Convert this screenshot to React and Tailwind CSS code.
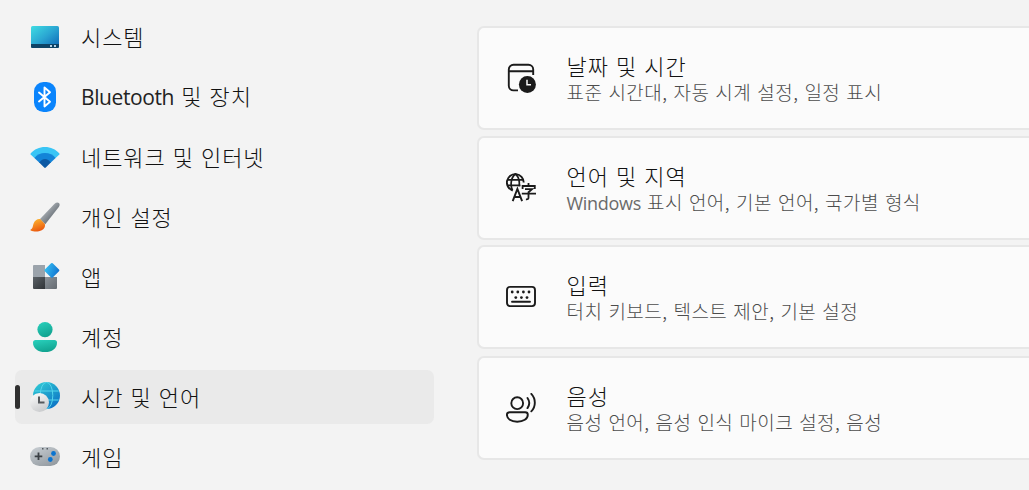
import React, { useState } from 'react';

// 사이드바 아이콘 (30x30)
function SystemIcon() {
  return (
    <svg width="30" height="30" viewBox="0 0 30 30">
      <defs>
        <linearGradient id="sys" x1="0" y1="0" x2="1" y2="1">
          <stop offset="0" stopColor="#3fdde3" />
          <stop offset="0.5" stopColor="#2aa5d2" />
          <stop offset="1" stopColor="#0b63b5" />
        </linearGradient>
      </defs>
      <rect x="1" y="4" width="28" height="22" rx="1.6" fill="url(#sys)" />
      <path d="M1 22h28v2.400a1.600 1.600 0 0 1-1.600 1.600H2.600A1.600 1.600 0 0 1 1 24.400z" fill="#0d4366" />
      <rect x="20" y="23" width="2" height="2" fill="#b5d3e6" />
      <rect x="24" y="23" width="2" height="2" fill="#b5d3e6" />
    </svg>
  );
}

function BluetoothIcon() {
  return (
    <svg width="30" height="30" viewBox="0 0 30 30">
      <rect x="4" y="0" width="22" height="30" rx="9.5" fill="#0a84fc" />
      <path d="M9 10.500l11 9.200-5.500 4.800v-19l5.500 4.800-11 9.200" fill="none" stroke="#fff" strokeWidth="1.9" strokeLinejoin="round" strokeLinecap="round" />
    </svg>
  );
}

function NetworkIcon() {
  return (
    <svg width="30" height="30" viewBox="0 0 30 30">
      <path d="M.600 11.400C4.300 7.300 9.300 5 15 5s10.700 2.300 14.400 6.400c.300.400.300.900 0 1.200L25.600 16H4.400L.600 12.600c-.300-.300-.300-.800 0-1.200z" fill="#39c5f5" />
      <path d="M4.400 16C7 12.800 10.700 11 15 11s8 1.800 10.600 5L20.300 21H9.700z" fill="#1384d8" />
      <path d="M9.200 20.600C10.700 18.500 12.700 17 15 17s4.300 1.500 5.800 3.600l-5 4.900c-.500.500-1.100.500-1.600 0z" fill="#0c59a4" />
    </svg>
  );
}

function BrushIcon() {
  return (
    <svg width="30" height="30" viewBox="0 0 30 30">
      <defs>
        <linearGradient id="handle" x1="0.2" y1="0.3" x2="0.7" y2="0.8">
          <stop offset="0" stopColor="#b4babf" />
          <stop offset="1" stopColor="#5f666d" />
        </linearGradient>
        <linearGradient id="tip" x1="0.3" y1="0" x2="0.7" y2="1">
          <stop offset="0" stopColor="#fdb52f" />
          <stop offset="1" stopColor="#e9520c" />
        </linearGradient>
      </defs>
      <path d="M9.800 17.200L24.600 1.800c1.500-1.500 3.300-1.600 4.300-.800 1 .900 1 2.400-.100 4L15.300 22.200z" fill="url(#handle)" />
      <path d="M.700 27.400c2.400-1 1.900-3.200 3-6.100 1.100-3 3.900-4.700 6.400-4.200l4.800 4.800c.700 2.700-.900 5.100-3.200 6.300-3.200 1.700-8 1.600-10.900.3-.500-.3-.500-.900-.1-1.100z" fill="url(#tip)" />
    </svg>
  );
}

function AppsIcon() {
  return (
    <svg width="30" height="30" viewBox="0 0 30 30">
      <defs>
        <linearGradient id="dark" x1="0" y1="0" x2="1" y2="1">
          <stop offset="0" stopColor="#5c6267" />
          <stop offset="1" stopColor="#303438" />
        </linearGradient>
        <linearGradient id="mid" x1="0" y1="0" x2="1" y2="1">
          <stop offset="0" stopColor="#8b9299" />
          <stop offset="1" stopColor="#656b71" />
        </linearGradient>
        <linearGradient id="gem" x1="0" y1="0.300" x2="1" y2="0.700">
          <stop offset="0" stopColor="#37c2f4" />
          <stop offset="1" stopColor="#0f6fce" />
        </linearGradient>
      </defs>
      <path d="M4 3h11v12H3V4a1 1 0 0 1 1-1z" fill="#9ba3ab" />
      <path d="M3 15h12v12H4a1 1 0 0 1-1-1z" fill="url(#dark)" />
      <path d="M15 15h12v11a1 1 0 0 1-1 1H15z" fill="url(#mid)" />
      <path d="M21.100 1.300a1.100 1.100 0 0 1 1.600 0l6.300 6.300a1.100 1.100 0 0 1 0 1.600l-6.300 6.300a1.100 1.100 0 0 1-1.600 0l-6.300-6.300a1.100 1.100 0 0 1 0-1.600z" fill="url(#gem)" />
    </svg>
  );
}

function AccountIcon() {
  return (
    <svg width="30" height="30" viewBox="0 0 30 30">
      <defs>
        <linearGradient id="acc" x1="0.300" y1="0" x2="0.700" y2="1">
          <stop offset="0" stopColor="#27cdb9" />
          <stop offset="1" stopColor="#10a08d" />
        </linearGradient>
      </defs>
      <circle cx="15" cy="7.600" r="7.600" fill="url(#acc)" />
      <path d="M5.500 18h19c1.500 0 2.500 1 2.500 2.400C27 26.500 22 30 15 30S3 26.500 3 20.400C3 19 4 18 5.500 18z" fill="url(#acc)" />
    </svg>
  );
}

function TimeIcon() {
  return (
    <svg width="30" height="30" viewBox="0 0 30 30">
      <defs>
        <linearGradient id="globe" x1="0.100" y1="0" x2="0.800" y2="1">
          <stop offset="0" stopColor="#32cdd5" />
          <stop offset="1" stopColor="#0b70c5" />
        </linearGradient>
        <linearGradient id="clock" x1="0.200" y1="0" x2="0.700" y2="1">
          <stop offset="0" stopColor="#fafafa" />
          <stop offset="1" stopColor="#c8cacc" />
        </linearGradient>
      </defs>
      <circle cx="16.500" cy="13.500" r="13.500" fill="url(#globe)" />
      <g fill="none" stroke="#55d5ec" strokeWidth="1">
        <ellipse cx="16.500" cy="13.500" rx="6.300" ry="13.200" />
        <path d="M4.600 9h24M4.600 18h24" />
      </g>
      <circle cx="9.500" cy="20.500" r="9.500" fill="url(#clock)" />
      <path d="M9 14.500V20.500h5.500" fill="none" stroke="#55595d" strokeWidth="2" />
    </svg>
  );
}

function GameIcon() {
  return (
    <svg width="30" height="30" viewBox="0 0 30 30">
      <defs>
        <linearGradient id="pad" x1="0.100" y1="0" x2="0.800" y2="1">
          <stop offset="0" stopColor="#c7cdd2" />
          <stop offset="1" stopColor="#92999f" />
        </linearGradient>
      </defs>
      <rect x="0" y="5" width="30" height="19" rx="9.500" fill="url(#pad)" />
      <path d="M8.500 10.500v7.500M4.700 14.300h7.600" stroke="#3b4045" strokeWidth="1.800" />
      <circle cx="23.500" cy="11.500" r="2.400" fill="#0b74d0" />
      <circle cx="20.300" cy="17.500" r="2.400" fill="#0b74d0" />
      <path d="M12 6h1.500v1.500H12zM16.500 6H18v1.500h-1.500z" fill="#555b60" />
    </svg>
  );
}

// 카드 아이콘 (30x30, 단색 선)
function DateTimeIcon() {
  return (
    <svg width="30" height="30" viewBox="0 0 30 30" fill="none" stroke="#1b1b1b" strokeWidth="1.900">
      <path d="M12 27.400H7.500a4.700 4.700 0 0 1-4.700-4.700V6.500a4.700 4.700 0 0 1 4.700-4.700h15a4.700 4.700 0 0 1 4.700 4.700V12M2.800 8.300h24.400" />
      <circle cx="21.400" cy="21.500" r="8.500" fill="#1b1b1b" stroke="none" />
      <path d="M21 16.700v5h4" stroke="#fbfbfb" strokeWidth="1.500" />
    </svg>
  );
}

function LanguageIcon() {
  return (
    <svg width="30" height="30" viewBox="0 0 30 30" fill="none" stroke="#1b1b1b" strokeWidth="1.900">
      <path d="M6.700 17.500A8.400 8.400 0 1 1 17.700 9.500" />
      <path d="M6.500 17.300C4.300 13 4.400 5 9.300 1c2.900 2.300 3.900 5.200 4 8.500v4M1.200 6.800h16.200M1 12.300h13.500" strokeWidth="1.700" />
      <path d="M6.700 28.200l4.700-12.200 4.700 12.200M8.100 24h6.600" />
      <path d="M22.500 10v2.800M16.600 16v-3h12.200v3M19 16.200h7l-3.500 3v5.500c0 1.300-.700 1.800-2.600 1.600M15.800 20.700H30" strokeWidth="1.800" />
    </svg>
  );
}

function KeyboardIcon() {
  return (
    <svg width="30" height="30" viewBox="0 0 30 30" fill="none" stroke="#1b1b1b" strokeWidth="1.900">
      <rect x="1" y="4.900" width="28" height="19.200" rx="3" />
      <path d="M6 19.700h18" strokeLinecap="round" />
      <g fill="#1b1b1b" stroke="none">
        <circle cx="6.200" cy="10" r="1.400" />
        <circle cx="11.800" cy="10" r="1.400" />
        <circle cx="17.400" cy="10" r="1.400" />
        <circle cx="23" cy="10" r="1.400" />
        <circle cx="9.800" cy="15.600" r="1.400" />
        <circle cx="15.400" cy="15.600" r="1.400" />
        <circle cx="21" cy="15.600" r="1.400" />
      </g>
    </svg>
  );
}

function SpeechIcon() {
  return (
    <svg width="30" height="30" viewBox="0 0 30 30" fill="none" stroke="#1b1b1b" strokeWidth="1.900" strokeLinecap="round">
      <circle cx="11.200" cy="10.200" r="5.900" />
      <path d="M3.800 19.200h15.400c1.600 0 2.600 1 2.600 2.500 0 4.200-4.400 7-10.600 7S.900 25.900.900 21.700c0-1.500 1.200-2.500 2.900-2.500z" />
      <path d="M21.500 5c2.100 3 2.100 7.100 0 10.100M25.300.900c4.700 5 4.700 12.600 0 17.400" />
    </svg>
  );
}

const menuItems = [
  { id: 'system', label: '시스템', Icon: SystemIcon },
  { id: 'bluetooth', latin: 'Bluetooth', label: ' 및 장치', Icon: BluetoothIcon },
  { id: 'network', label: '네트워크 및 인터넷', Icon: NetworkIcon },
  { id: 'personal', label: '개인 설정', Icon: BrushIcon },
  { id: 'apps', label: '앱', Icon: AppsIcon },
  { id: 'accounts', label: '계정', Icon: AccountIcon },
  { id: 'time', label: '시간 및 언어', Icon: TimeIcon },
  { id: 'game', label: '게임', Icon: GameIcon },
];

const cards = [
  { title: '날짜 및 시간', desc: '표준 시간대, 자동 시계 설정, 일정 표시', Icon: DateTimeIcon, gap: '' },
  { title: '언어 및 지역', latin: 'Windows', desc: ' 표시 언어, 기본 언어, 국가별 형식', Icon: LanguageIcon, gap: 'mt-1.5' },
  { title: '입력', desc: '터치 키보드, 텍스트 제안, 기본 설정', Icon: KeyboardIcon, gap: 'mt-[5px]' },
  { title: '음성', desc: '음성 언어, 음성 인식 마이크 설정, 음성', Icon: SpeechIcon, gap: 'mt-[7px]' },
];

export default function App() {
  const [active, setActive] = useState('time');

  return (
    <div className="flex w-full h-[490px] overflow-hidden bg-[#f3f3f3] text-[#111111] font-light font-['Noto_Sans_CJK_KR',sans-serif]">
      {/* 왼쪽 메뉴 */}
      <nav className="w-[434px] shrink-0 pl-[15px] pt-2.5 flex flex-col gap-1.5">
        {menuItems.map((item) => (
          <MenuItem key={item.id} item={item} selected={active === item.id} onSelect={() => setActive(item.id)} />
        ))}
      </nav>

      {/* 설정 카드 목록 */}
      <main className="flex-1 min-w-0 pl-[43px] pt-[26px]">
        {cards.map((card) => (
          <SettingCard key={card.title} card={card} />
        ))}
      </main>
    </div>
  );
}

function MenuItem({ item, selected, onSelect }) {
  const { Icon } = item;
  return (
    <button
      onClick={onSelect}
      className={`h-[54px] shrink-0 flex items-center rounded-[7px] text-left ${selected ? 'bg-[#eaeaea]' : ''}`}
    >
      <span className={`w-[5px] h-6 rounded-full mr-2.5 ${selected ? 'bg-[#303030]' : ''}`} />
      <Icon />
      <span className="ml-[21px] pb-0.5 text-[22px] leading-[30px] tracking-[0.9px] [word-spacing:1.4px] whitespace-pre">
        {item.latin && <span className="font-['Open_Sans'] font-normal text-[21px] tracking-[-0.4px] text-[#222222]">{item.latin}</span>}
        {item.label}
      </span>
    </button>
  );
}

function SettingCard({ card }) {
  const { Icon } = card;
  return (
    <div className={`h-[104px] flex items-center pl-[27px] border-2 border-r-0 border-[#e7e7e7] rounded-l-[7px] bg-[#fbfbfb] ${card.gap}`}>
      <Icon />
      <div className="ml-[30.5px] flex flex-col">
        <p className="mb-0.5 text-[22px] leading-[26px] tracking-[0.9px] [word-spacing:1.4px]">{card.title}</p>
        <p className="text-[19px] leading-[24px] tracking-[0.45px] [word-spacing:1.4px] whitespace-pre text-[#4c4c4c]">
          {card.latin && <span className="font-['Open_Sans'] font-normal text-[18px] tracking-[-0.3px] text-[#6a6a6a]">{card.latin}</span>}
          {card.desc}
        </p>
      </div>
    </div>
  );
}
